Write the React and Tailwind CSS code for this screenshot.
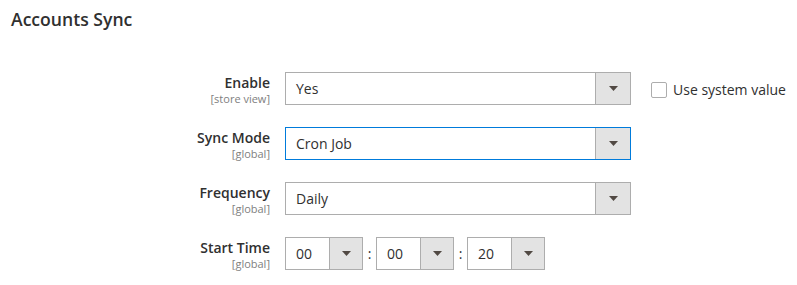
import React from "react";

function Arrow() {
  return (
    <svg width="9" height="5" viewBox="0 0 9 5" className="block">
      <polygon points="0,0 9,0 4.5,5" fill="#514943" />
    </svg>
  );
}

function Select({ value, width = "w-[346px]", btn = "w-[35px]", focus = false }) {
  return (
    <div
      className={`${width} h-[33px] flex border bg-white ${
        focus ? "border-[#007bdb]" : "border-[#adadad]"
      }`}
    >
      <div className="flex-1 flex items-center pl-[10px] text-[14px]">{value}</div>
      <div
        className={`${btn} h-full border-l border-[#adadad] bg-[#e3e3e3] flex items-center justify-center`}
      >
        <Arrow />
      </div>
    </div>
  );
}

function Label({ title, scope }) {
  return (
    <div className="w-[270px] text-right pt-[2px]">
      <div className="text-[14px] font-semibold leading-[18px]">{title}</div>
      <div className="text-[11px] leading-[13px] text-[#808080]">{scope}</div>
    </div>
  );
}

export default function App() {
  return (
    <div className="w-[797px] h-[285px] bg-white text-[#303030] font-['Open_Sans',sans-serif]">
      <h2 className="h-[30px] pl-[11px] pt-[9px] text-[17.6px] font-semibold leading-[20px] text-[#303030]">
        Accounts Sync
      </h2>
      <div className="mt-[42px] flex flex-col gap-[22px]">
        <div className="flex items-start">
          <Label title="Enable" scope="[store view]" />
          <div className="ml-[15px]">
            <Select value="Yes" />
          </div>
          <label className="ml-[20px] mt-[10px] flex items-center gap-[6px] text-[14px] leading-[16px]">
            <span className="w-[16px] h-[16px] border border-[#adadad] rounded-[2px] bg-white" />
            Use system value
          </label>
        </div>
        <div className="flex items-start">
          <Label title="Sync Mode" scope="[global]" />
          <div className="ml-[15px]">
            <Select value="Cron Job" focus />
          </div>
        </div>
        <div className="flex items-start">
          <Label title="Frequency" scope="[global]" />
          <div className="ml-[15px]">
            <Select value="Daily" />
          </div>
        </div>
        <div className="flex items-start">
          <Label title="Start Time" scope="[global]" />
          <div className="ml-[15px] flex items-center">
            <Select value="00" width="w-[78px]" btn="w-[33px]" />
            <span className="w-[13px] text-center text-[14px]">:</span>
            <Select value="00" width="w-[78px]" btn="w-[33px]" />
            <span className="w-[13px] text-center text-[14px]">:</span>
            <Select value="20" width="w-[78px]" btn="w-[33px]" />
          </div>
        </div>
      </div>
    </div>
  );
}
